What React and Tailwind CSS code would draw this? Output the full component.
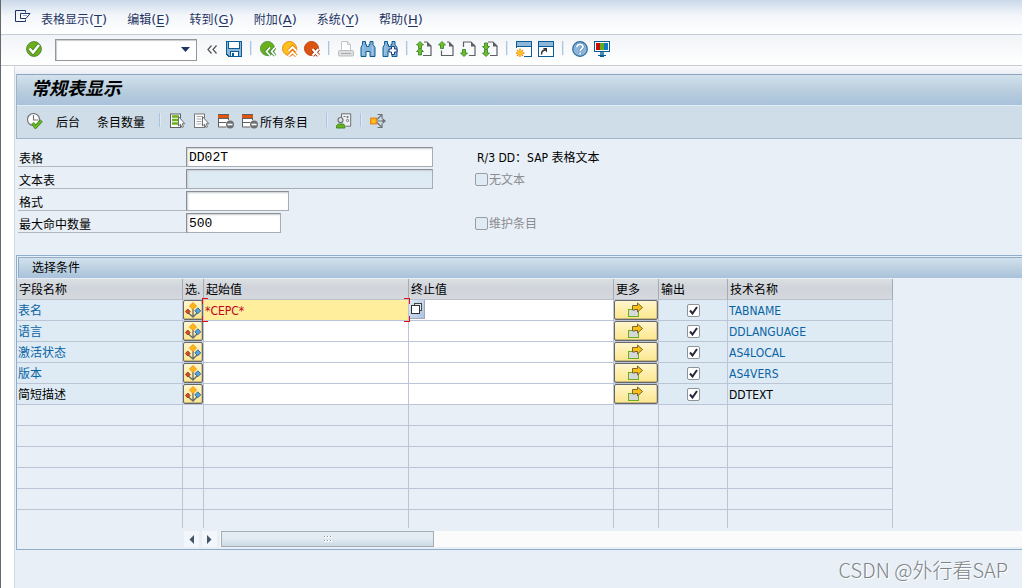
import React from "react";

const LATIN = "font-['DejaVu_Sans_Condensed','Noto_Sans_CJK_SC',sans-serif]";

function Icon({ children, w = 16, h = 16, crisp = false }) {
  return (
    <svg
      width={w}
      height={h}
      viewBox={`0 0 ${w} ${h}`}
      fill="none"
      shapeRendering={crisp ? "crispEdges" : "auto"}
      className="block shrink-0"
      aria-hidden="true"
    >
      {children}
    </svg>
  );
}

const MenuIcon = () => (
  <Icon w={16} h={13}>
    <path d="M10.5 2.500V.5H.5v11h10V9.500" stroke="#1f3564" />
    <path d="M5.500 8.500v-5h9.500l-4 5z" fill="#fff" stroke="#1f3564" />
    <path d="M8 5.500h4" stroke="#9aa8c8" />
  </Icon>
);

const OkIcon = () => (
  <Icon>
    <circle cx="8" cy="8" r="7.400" fill="#6bb01c" stroke="#5a8a3c" />
    <path d="M3.500 7.500l3.500 4 6-7.500" stroke="#3f7a1c" strokeWidth="4" />
    <path d="M3.500 7.500l3.500 4 6-7.500" stroke="#fff" strokeWidth="2.600" />
  </Icon>
);

const SaveIcon = () => (
  <Icon crisp>
    <path d="M0 0h16v16H2l-2-2z" fill="#0b5c94" />
    <path d="M1 1h14v14H3l-2-2z" fill="#8fb7d9" />
    <path d="M2 0h12v8H2z" fill="#0b5c94" />
    <path d="M3 1h10v6H3z" fill="#fff" />
    <path d="M4 10h9v6H4z" fill="#0b5c94" />
    <path d="M5 11h7v4H5z" fill="#fff" />
    <path d="M6 12h2v3H6z" fill="#0b5c94" />
  </Icon>
);

const BackIcon = () => (
  <Icon>
    <circle cx="7.500" cy="7.500" r="7" fill="#6bb01c" stroke="#4f9a3a" />
    <path d="M10 6.500L6.500 10.500l3.500 4M15 6.500l-3.500 4 3.500 4" stroke="#3f8a2a" strokeWidth="3.400" />
    <path d="M10 6.500L6.500 10.500l3.500 4M15 6.500l-3.500 4 3.500 4" stroke="#fff" strokeWidth="1.800" />
  </Icon>
);

const UpIcon = () => (
  <Icon>
    <circle cx="7.500" cy="7.500" r="7" fill="#fdc01c" stroke="#f08a10" />
    <path d="M6.500 10l4-4 4 4M6.500 15l4-4 4 4" stroke="#e8780c" strokeWidth="3.400" />
    <path d="M6.500 10l4-4 4 4M6.500 15l4-4 4 4" stroke="#fff" strokeWidth="1.800" />
  </Icon>
);

const CancelIcon = () => (
  <Icon>
    <circle cx="7.500" cy="7.500" r="7" fill="#dd5410" stroke="#b8481a" />
    <path d="M8.500 8l6 6.500M14.500 8l-6 6.500" stroke="#a83208" strokeWidth="4" />
    <path d="M8.500 8l6 6.500M14.500 8l-6 6.500" stroke="#fff" strokeWidth="2.200" />
  </Icon>
);

const PrintIcon = () => (
  <Icon>
    <path d="M3.500 9V.5h6l3 3V9" fill="#fff" stroke="#c3c6c8" />
    <path d="M9.500.500v3h3" stroke="#c3c6c8" />
    <rect x=".5" y="9.500" width="15" height="5.500" rx="1" fill="#dcdedf" stroke="#bcbfc1" />
    <path d="M3 12.500h10" stroke="#a9adaf" />
  </Icon>
);

const Binoculars = () => (
  <>
    <path d="M2.500.500h3v3h1v2h2.500v-2h1v-3h3v3l2 3v9h-5v-5h-4v5h-5v-9l1.500-3z" fill="#85b3da" stroke="#0b5c94" />
    <path d="M3 5v9M12.500 5v9" stroke="#a5c8e6" />
  </>
);

const FindIcon = () => (
  <Icon>
    <Binoculars />
  </Icon>
);

const FindNextIcon = () => (
  <Icon>
    <Binoculars />
    <path d="M9.500 5.500h3v2.500H15v3h-2.500v2.500h-3V11H7V8h2.500z" fill="#fff" stroke="#1c3f7c" />
  </Icon>
);

const ARROW_UP = "M4 .5L7.500 4H5.500v3.500h-3V4H.5z";
const ARROW_DOWN = "M2.500.500h3V4h2L4 7.500.500 4h2z";

function PageIcon({ arrows, page }) {
  return (
    <Icon>
      <path d={page} stroke="#5d6164" strokeWidth="1.200" />
      <path d="M11 1l4.500 4.500H11z" fill="#5d6164" />
      {arrows.map(([d, y]) => (
        <path key={y} d={d} transform={`translate(0 ${y})`} fill="#7cbd1e" stroke="#2f8a3c" strokeWidth=".9" />
      ))}
    </Icon>
  );
}

const FirstPage = () => <PageIcon page="M8 1h3l4 4v9.500H7" arrows={[[ARROW_UP, 0], [ARROW_UP, 6.5]]} />;
const PrevPage = () => <PageIcon page="M9 1h2l4 4v9.500H3.500V9.500" arrows={[[ARROW_UP, 0]]} />;
const NextPage = () => <PageIcon page="M3.500 6V1H11l4 4v9.500H9" arrows={[[ARROW_DOWN, 8]]} />;
const LastPage = () => <PageIcon page="M6 1h5l4 4v9.500H8" arrows={[[ARROW_DOWN, 1.5], [ARROW_DOWN, 8]]} />;

const WindowBase = () => (
  <>
    <rect x=".5" y=".5" width="15" height="15" fill="#fff" stroke="#0b5c94" />
    <path d="M1 1h14v4H1z" fill="#8fb7d9" />
    <path d="M1 5.500h14" stroke="#0b5c94" />
  </>
);

const NewSession = () => (
  <Icon>
    <WindowBase />
    <path d="M0 7h8v9H0z" fill="#fff" />
    <path d="M4 7.500v9M-.5 12h9M1 9l6 6M7 9l-6 6" stroke="#f28c10" strokeWidth="1.400" />
    <circle cx="4" cy="12" r="2.300" fill="#ffc21a" />
  </Icon>
);

const Shortcut = () => (
  <Icon>
    <WindowBase />
    <path d="M3.500 13.500c0-3 1-4.500 4-4.500" stroke="#333" strokeWidth="1.500" />
    <path d="M5 7h4v4.500z" fill="#333" />
  </Icon>
);

const HelpIcon = () => (
  <Icon>
    <circle cx="8" cy="8" r="7.300" fill="#8cb5dc" stroke="#2a6a9c" strokeWidth="1.200" />
    <path d="M5 6.200c0-3.800 6-3.600 6-.4 0 2-2.800 2-2.800 4.200M8.200 11.500v2" stroke="#4c86b8" strokeWidth="3" />
    <path d="M5 6.200c0-3.800 6-3.600 6-.4 0 2-2.800 2-2.800 4.200M8.200 11.500v2" stroke="#fff" strokeWidth="1.800" />
  </Icon>
);

const MonitorIcon = () => (
  <Icon crisp>
    <path d="M0 0h16v11H0z" fill="#0b5c94" />
    <path d="M1 1h14v9H1z" fill="#fff" />
    <path d="M2 2h4v7H2z" fill="#cc0a0a" />
    <path d="M6 2h4v7H6z" fill="#5fae1c" />
    <path d="M10 2h4v7h-4z" fill="#1478c8" />
    <path d="M6 11h4v3H6z" fill="#4a8cbc" />
    <path d="M4 14h8v1H4z" fill="#0b5c94" />
    <path d="M6 15h4v1H6z" fill="#0b5c94" />
  </Icon>
);

const ExecIcon = () => (
  <Icon>
    <circle cx="6.500" cy="6.500" r="6" fill="#fff" stroke="#74787b" strokeWidth="1.200" />
    <path d="M6.500 2v5H11" stroke="#74787b" strokeWidth="1.200" />
    <path d="M5.500 10l3 4 6-6.500" stroke="#3d8a24" strokeWidth="3.400" />
    <path d="M5.500 10l3 4 6-6.500" stroke="#74bb22" strokeWidth="1.800" />
  </Icon>
);

const Cursor = () => <path d="M8.500 3.500v9.500l2-1.800 1.300 3.200 1.700-.7-1.300-3h2.600z" fill="#fff" stroke="#6d7174" />;

const SelectAll = () => (
  <Icon>
    <rect x=".5" y="1" width="10" height="13.500" fill="#fff" stroke="#5d6164" />
    <path d="M2 3.500h7M2 7h6M2 10.500h6" stroke="#6bb01c" strokeWidth="2.400" />
    <Cursor />
  </Icon>
);

const SelectBlock = () => (
  <Icon>
    <rect x=".5" y="1" width="10" height="13.500" fill="#fff" stroke="#74787b" />
    <path d="M2.500 3.500h6M2.500 6h5M2.500 8.500h5M2.500 11h5" stroke="#a4a8ab" />
    <Cursor />
  </Icon>
);

const DeleteRow = () => (
  <Icon>
    <path d="M10.500 7V1.500H.5v12.500H8" fill="#fff" stroke="#5d6164" />
    <path d="M0 1h11v5H0z" fill="#5d6164" />
    <path d="M0 2h11v3H0z" fill="#e0550e" />
    <path d="M0 9.500h8" stroke="#5d6164" />
    <circle cx="12" cy="11.500" r="4" fill="#6d7174" />
    <path d="M9.500 11.500h5" stroke="#fff" strokeWidth="1.600" />
  </Icon>
);

const PersonCard = () => (
  <Icon>
    <path d="M5.500 6V.800h9.200v12.400H10" fill="#eef1f3" stroke="#6d7174" />
    <circle cx="11.500" cy="4" r="1.100" fill="#6d7174" />
    <circle cx="11.500" cy="7.500" r="1.100" stroke="#6d7174" />
    <path d="M7.500 3.500h2" stroke="#6d7174" />
    <circle cx="4.500" cy="7" r="2.500" fill="#dfe3e6" stroke="#6d7174" strokeWidth="1.200" />
    <path d="M.6 15v-2.500l2-1.500h4.300l2 1.500V15z" fill="#6bb01c" stroke="#3d8a24" />
  </Icon>
);

const Branch = () => (
  <Icon>
    <rect x=".7" y="5.200" width="5.600" height="5.600" fill="#ffc21a" stroke="#ee8512" strokeWidth="1.300" />
    <path d="M7 8h8M7 6.500l4.500-4.500M7 9.500l4.500 4.500" stroke="#6d7174" strokeWidth="1.200" />
    <path d="M7.500 1.500h4.500V5.500M7.500 14.500h4.500V10.500" stroke="#6d7174" strokeWidth="1.200" />
    <path d="M12.500 5L16 8l-3.500 3z" fill="#6d7174" />
  </Icon>
);

const OptionIcon = () => (
  <Icon>
    <path d="M8 7v8M2.800 10.500L8 15l5-5" stroke="#666a70" strokeWidth="1.300" />
    <path d="M8 .5L11.500 4 8 7.500 4.500 4z" fill="#fdb813" stroke="#ee8512" strokeWidth=".8" />
    <path d="M2.800 7l2.400 2.500L2.800 12 .4 9.500z" fill="#c8502c" stroke="#9c2a10" strokeWidth=".8" />
    <path d="M12.800 5.800l3 3-3 3-3-3z" fill="#5aa0dc" stroke="#1c5c90" strokeWidth=".8" />
  </Icon>
);

const MoreIcon = () => (
  <Icon>
    <rect x=".5" y="7.500" width="10" height="7" fill="#d6d8da" stroke="#6bb01c" />
    <path d="M4.500 8V3.500h5V1L14.500 5.500 9.500 10V7.500H7V8z" fill="#fcc015" stroke="#6a5a30" strokeWidth=".9" />
  </Icon>
);

const F4Icon = () => (
  <Icon w={12} h={12} crisp>
    <path d="M3 0h8v8H3z" fill="#444" />
    <path d="M4 1h6v6H4z" fill="#e8eaec" />
    <path d="M0 2h9v9H0z" fill="#333" />
    <path d="M1 3h7v7H1z" fill="#fff" />
  </Icon>
);

const Sep = () => (
  <span className="flex h-4 w-1.5 shrink-0 justify-center">
    <span className="h-3.5 w-0.5 border-r border-[#dfe9f3] bg-[#a9c4e0]" />
  </span>
);

function Tool({ icon: I, label }) {
  return (
    <button type="button" aria-label={label} className="shrink-0">
      <I />
    </button>
  );
}

const MENUS = [
  ["表格显示", "T"],
  ["编辑", "E"],
  ["转到", "G"],
  ["附加", "A"],
  ["系统", "Y"],
  ["帮助", "H"],
];

const TOOLS = [
  [SaveIcon, "保存"], null,
  [BackIcon, "返回"], [UpIcon, "退出"], [CancelIcon, "取消"], null,
  [PrintIcon, "打印"], [FindIcon, "查找"], [FindNextIcon, "继续查找"], null,
  [FirstPage, "首页"], [PrevPage, "上一页"], [NextPage, "下一页"], [LastPage, "末页"], null,
  [NewSession, "新会话"], [Shortcut, "快捷方式"], null,
  [HelpIcon, "帮助"], [MonitorIcon, "布局"],
];

const ROWS = [
  { name: "表名", from: "*CEPC*", tech: "TABNAME", active: true },
  { name: "语言", from: "", tech: "DDLANGUAGE" },
  { name: "激活状态", from: "", tech: "AS4LOCAL" },
  { name: "版本", from: "", tech: "AS4VERS" },
  { name: "简短描述", from: "", tech: "DDTEXT", plain: true },
];

const HEADERS = ["字段名称", "选.", "起始值", "终止值", "更多", "输出", "技术名称"];
const EMPTY = [0, 1, 2, 3, 4];

function FieldRow({ id, label, value, width, disabled, children }) {
  return (
    <div className="flex h-5">
      <label htmlFor={id} className="w-[168px] shrink-0 border-b border-[#b4b8bc] pt-0.5 pl-px leading-5">
        {label}
      </label>
      <div className="w-[289px] shrink-0">
        <input
          id={id}
          defaultValue={value}
          disabled={disabled}
          className={`block h-5 border border-t-[#8b8f93] border-r-[#a9adb1] border-b-[#a9adb1] border-l-[#8b8f93] px-0.5 font-['Liberation_Mono','Noto_Sans_CJK_SC',monospace] text-[13px] leading-4 shadow-[inset_1px_1px_2px_#c8ccd0] outline-none ${width} ${disabled ? "bg-[#deebf4]" : "bg-white"}`}
        />
      </div>
      {children}
    </div>
  );
}

function DisabledCheck({ label }) {
  return (
    <label className="flex items-center gap-px pt-px text-[#8a8d92]">
      <input type="checkbox" disabled className="size-[13px] appearance-none rounded-xs border border-[#999da1] bg-[#deebf4]" />
      <span className="pt-px">{label}</span>
    </label>
  );
}

function RowCheck({ label }) {
  return (
    <span className="mx-auto grid size-[13px] place-items-center">
      <input
        type="checkbox"
        defaultChecked
        aria-label={label}
        className="peer col-start-1 row-start-1 size-[13px] appearance-none rounded-xs border border-[#8f9397] bg-white"
      />
      <svg width="9" height="9" viewBox="0 0 9 9" fill="none" aria-hidden="true" className="pointer-events-none invisible col-start-1 row-start-1 peer-checked:visible">
        <path d="M1 4.500l2.500 3L8 1" stroke="#26283a" strokeWidth="2" />
      </svg>
    </span>
  );
}

function FocusCorners() {
  return (
    <span className="pointer-events-none absolute -inset-x-0.5 -inset-y-0.5">
      <span className="absolute top-0 left-0 size-1.5 border-t border-l border-[#e01010]" />
      <span className="absolute top-0 right-0 size-1.5 border-t border-r border-[#e01010]" />
      <span className="absolute bottom-0 left-0 size-1.5 border-b border-l border-[#e01010]" />
      <span className="absolute right-0 bottom-0 size-1.5 border-r border-b border-[#e01010]" />
    </span>
  );
}

const YELLOW = "flex h-5 w-full items-center justify-center rounded-xs border border-[#66676a] bg-linear-to-b from-[#fff6d0] via-[#feeeaa] to-[#fbe68e] shadow-[inset_0_-1px_0_#c9b878,inset_-1px_0_0_#d9c888]";

export default function App() {
  return (
    <div className={`flex min-h-screen flex-col overflow-hidden border-l border-[#66686c] bg-white text-[12px] text-black ${LATIN}`}>
      <nav className="flex h-[35px] items-center border-b border-[#c5cdd4] bg-linear-to-b from-[#cbd9ea] via-[#f3f6fa] via-45% to-white pl-3.5 text-[#1f3564]">
        <button type="button" aria-label="系统菜单" className="mb-0.5">
          <MenuIcon />
        </button>
        <div className="flex gap-5 pt-1.5 pl-2.5">
          {MENUS.map(([text, key]) => (
            <button type="button" key={key} className="flex items-baseline leading-5 whitespace-nowrap">
              {text}
              <span className="font-['DejaVu_Sans',sans-serif] text-[13px]">
                (<span className="underline underline-offset-2">{key}</span>)
              </span>
            </button>
          ))}
        </div>
      </nav>

      <div className="flex h-[31px] items-center border-b border-[#c9cdd2] bg-linear-to-b from-[#f1f4f8] to-white pb-0.5 pl-[25px]">
        <Tool icon={OkIcon} label="回车" />
        <div className="mt-0.5 ml-[13px] flex h-[22px] w-[142px] items-center border border-[#94989c] bg-white shadow-[inset_1px_1px_1px_#c8ccd0]">
          <input aria-label="命令" className="h-full min-w-0 flex-1 bg-transparent px-1 outline-none" />
          <button type="button" aria-label="历史记录" className="mr-1.5 pb-0.5">
            <Icon w={9} h={5}>
              <path d="M0 0h9L4.500 5z" fill="#1f3564" />
            </Icon>
          </button>
        </div>
        <button type="button" aria-label="收起" className="mr-2 ml-2.5">
          <Icon w={11} h={9}>
            <path d="M4.500.500l-3.500 4 3.500 4M9.500.500L6 4.500l3.500 4" stroke="#55595d" strokeWidth="1.300" />
          </Icon>
        </button>
        <div className="flex items-center gap-1.5">
          {TOOLS.map((t, i) => (t ? <Tool key={i} icon={t[0]} label={t[1]} /> : <Sep key={i} />))}
        </div>
      </div>

      <main className="ml-[13px] flex flex-1 flex-col border-l border-[#d3d9e4] bg-[#e8eff6]">
        <div className="h-2 bg-linear-to-b from-[#fafafc] to-[#e9edf4]" />
        <div className="ml-px border-l border-[#a0b4c8]">
          <h1 className="h-8 border-t border-b border-t-[#8fa5bb] border-b-[#e2ecf5] bg-linear-to-b from-[#d2e1ed] via-[#b6cbdc] via-60% to-[#a9c2dc] pl-3.5 text-[18px] leading-7 font-bold italic">
            常规表显示
          </h1>
          <div className="flex h-[33px] items-center border-b border-[#a3b5c6] bg-[#cfdde8] pl-2.5 whitespace-nowrap">
            <div className="flex items-center pb-0.5">
              <Tool icon={ExecIcon} label="执行" />
            </div>
            <button type="button" className="ml-[13px] pt-0.5">后台</button>
            <button type="button" className="ml-[17px] pt-0.5">条目数量</button>
            <div className="ml-3 flex items-center gap-2 pb-0.5">
              <Sep />
              <div className="-ml-px flex items-center gap-2">
                <Tool icon={SelectAll} label="选择全部" />
                <Tool icon={SelectBlock} label="选择块" />
                <Tool icon={DeleteRow} label="删除行" />
              </div>
            </div>
            <button type="button" className="ml-2 flex items-center gap-0.5">
              <span className="pb-0.5">
                <DeleteRow />
              </span>
              <span className="pt-0.5">所有条目</span>
            </button>
            <div className="ml-4 flex items-center gap-1.5 pb-0.5">
              <Sep />
              <Tool icon={PersonCard} label="用户" />
              <Sep />
              <Tool icon={Branch} label="分支" />
            </div>
          </div>
        </div>

        <form className="flex flex-col gap-0.5 pt-2 pl-[3px]" onSubmit={(e) => e.preventDefault()}>
          <FieldRow id="table" label="表格" value="DD02T" width="w-[247px]">
            <span className="pt-px pl-0.5 leading-5">R/3 DD：SAP 表格文本</span>
          </FieldRow>
          <FieldRow id="text-table" label="文本表" width="w-[247px]" disabled>
            <DisabledCheck label="无文本" />
          </FieldRow>
          <FieldRow id="layout" label="格式" width="w-[103px]" />
          <FieldRow id="max-hits" label="最大命中数量" value="500" width="w-[95px]">
            <DisabledCheck label="维护条目" />
          </FieldRow>
        </form>

        <section className="mt-[22px] ml-px border-t border-b border-l border-[#8facca] pt-px">
          <h2 className="mb-px ml-px h-[21px] border-t border-l border-[#8facca] bg-linear-to-b from-[#d2e1ed] via-[#b9cedf] via-60% to-[#a9c2dc] pl-[13px] leading-[20px]">
            选择条件
          </h2>
          <table className="w-[876px] table-fixed border-separate border-spacing-0 text-left">
            <colgroup>
              <col className="w-[166px]" />
              <col className="w-[21px]" />
              <col className="w-[205px]" />
              <col className="w-[205px]" />
              <col className="w-[45px]" />
              <col className="w-[69px]" />
              <col className="w-[165px]" />
            </colgroup>
            <thead>
              <tr className="h-[21px]">
                {HEADERS.map((h) => (
                  <th key={h} scope="col" className="overflow-hidden border-r border-b border-r-[#a3acb6] border-b-[#b9c2cc] bg-linear-to-b from-[#dadfe2] via-[#cfd3da] to-[#d6d9dd] p-0 pt-0.5 pl-0.5 leading-[18px] font-normal whitespace-nowrap">
                    {h}
                  </th>
                ))}
              </tr>
            </thead>
            <tbody className="[&_td]:border-r [&_td]:border-b [&_td]:border-[#bcc5d5]">
              {ROWS.map((r) => {
                const tone = r.plain ? "text-black" : "text-[#0a64a4]";
                return (
                  <tr key={r.tech} className="h-[21px]">
                    <td className={`bg-[#deebf5] p-0 pt-0.5 pl-px leading-[18px] ${tone}`}>{r.name}</td>
                    <td className="bg-[#deebf5] p-0">
                      <button type="button" aria-label={`${r.name} 选项`} className={YELLOW}>
                        <OptionIcon />
                      </button>
                    </td>
                    <td className={`p-0 ${r.active ? "bg-[#ffee9c]" : "bg-white"}`}>
                      <div className="relative">
                        <input
                          aria-label={`${r.name} 起始值`}
                          defaultValue={r.from}
                          className="block h-5 w-full bg-transparent pt-0.5 pl-px text-[#c00020] outline-none"
                        />
                        {r.active && <FocusCorners />}
                      </div>
                    </td>
                    <td className="bg-white p-0">
                      <div className="flex h-5">
                        {r.active && (
                          <button type="button" aria-label="可能的输入" className="flex h-[19px] w-4 shrink-0 items-center justify-center border-r border-b border-[#a4a8ae] bg-linear-to-br from-[#e4ecf8] to-[#a9c2e6]">
                            <F4Icon />
                          </button>
                        )}
                        <input aria-label={`${r.name} 终止值`} className="h-5 min-w-0 flex-1 bg-transparent px-px outline-none" />
                      </div>
                    </td>
                    <td className="bg-[#deebf5] p-0">
                      <button type="button" aria-label={`${r.name} 更多`} className={YELLOW}>
                        <MoreIcon />
                      </button>
                    </td>
                    <td className="bg-[#deebf5] p-0">
                      <RowCheck label={`${r.name} 输出`} />
                    </td>
                    <td className={`bg-[#deebf5] p-0 pt-0.5 pl-px leading-[18px] ${tone}`}>{r.tech}</td>
                  </tr>
                );
              })}
              {EMPTY.map((n) => (
                <tr key={n} className="h-[21px]">
                  {HEADERS.map((h) => (
                    <td key={h} className="p-0" />
                  ))}
                </tr>
              ))}
              <tr className="h-[18px] [&>td]:border-b-0">
                {HEADERS.map((h) => (
                  <td key={h} className="p-0" />
                ))}
              </tr>
            </tbody>
          </table>
          <div className="flex gap-[3px] pt-[3px] pb-0.5 pl-[167px]">
            <button type="button" aria-label="向左滚动" className="flex h-4 w-[15px] items-center justify-center bg-[#f3f6fa]">
              <Icon w={5} h={9}>
                <path d="M5 0v9L.500 4.500z" fill="#3f5568" />
              </Icon>
            </button>
            <button type="button" aria-label="向右滚动" className="flex h-4 w-[15px] items-center justify-center bg-[#f3f6fa]">
              <Icon w={5} h={9}>
                <path d="M0 0v9l4.500-4.500z" fill="#3f5568" />
              </Icon>
            </button>
            <div className="flex-1 bg-[#fbfbfb] pl-px">
              <div className="flex h-4 w-[213px] items-center justify-center border border-[#a3adb7] bg-linear-to-b from-[#e6eef5] via-[#e1eaf1] to-[#cddae4]">
                <Icon w={8} h={6} crisp>
                  <path d="M0 0h2v2H0zM3 0h2v2H3zM6 0h2v2H6zM0 4h2v2H0zM3 4h2v2H3zM6 4h2v2H6z" fill="#fff" />
                  <path d="M0 0h1v1H0zM3 0h1v1H3zM6 0h1v1H6zM0 4h1v1H0zM3 4h1v1H3zM6 4h1v1H6z" fill="#8b97a3" />
                </Icon>
              </div>
            </div>
          </div>
        </section>

        <footer className="pt-2 pr-3.5 text-right font-['Noto_Sans_CJK_SC',sans-serif] text-[20px] leading-6 font-light text-[#7f8387] [text-shadow:1px_1px_0_#fff]">
          CSDN @外行看SAP
        </footer>
      </main>
    </div>
  );
}
